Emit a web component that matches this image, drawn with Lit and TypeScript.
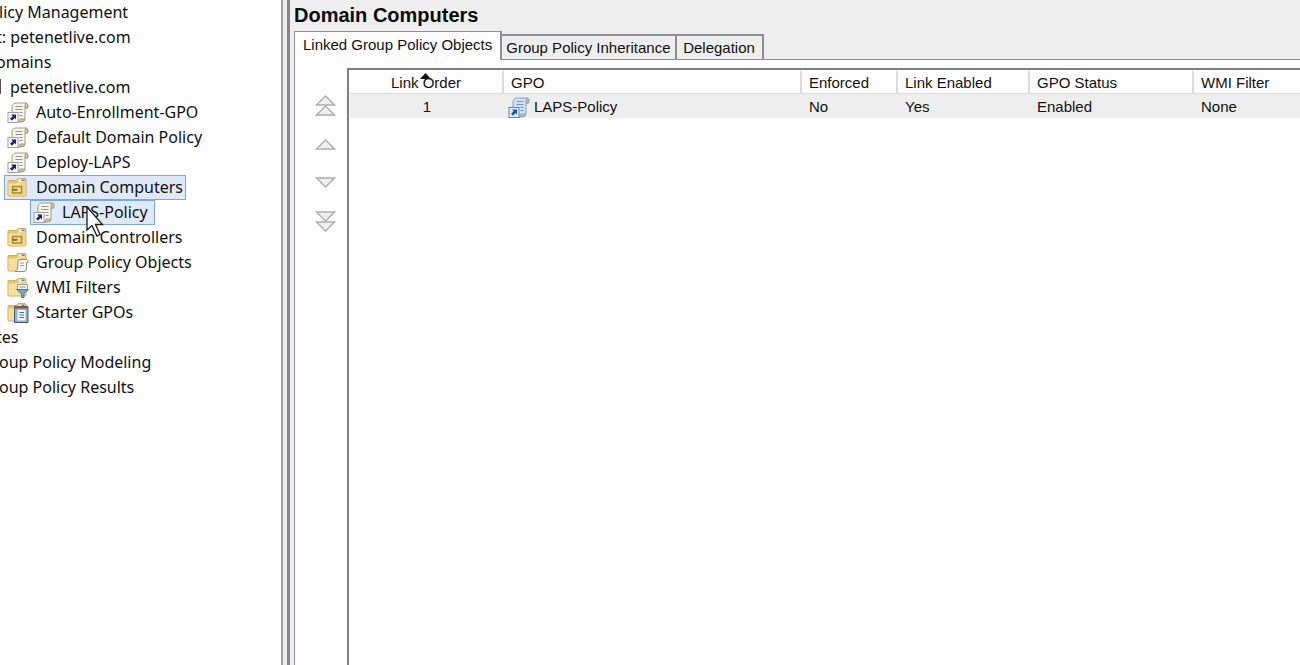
import { LitElement, html, css, svg, nothing } from "lit";
import { customElement, state } from "lit/decorators.js";

const sheet = (paper: string, roll: string, edge: string, ink: string) => svg`
  <path d="M6 2.500 Q6.500 1 8.500 1 H19.500 Q21.200 1.500 20.800 4.500 L20.500 6 H18 V16 Q18 19.500 15 19.800 H5 V4 Z" fill="${paper}" stroke="${edge}" stroke-width=".9"/>
  <path d="M18 6 V3 Q18.200 1 19.600 1.200 Q21.400 2 20.800 5 L20.500 6 Z" fill="${roll}" stroke="${edge}" stroke-width=".8"/>
  <path d="M11 19.800 Q13 19.500 13 17 H18 Q18 19.500 15 19.800 Z" fill="${roll}" stroke="${edge}" stroke-width=".8"/>
  <path d="M8.500 4.500 H15.500 M8.500 7.500 H15.500 M12.500 10.500 H15.500 M12.500 13.500 H15.500" stroke="${ink}" stroke-width="1.200"/>`;

const shortcut = (box: string, edge: string, arrow: string) => svg`
  <rect x="1" y="10.500" width="10" height="10" fill="${box}" stroke="${edge}"/>
  <path d="M4 12.500 H9 V17.500 L7.500 16 L5 18.800 L3 16.800 L5.700 14.200 Z" fill="${arrow}"/>`;

const folder = svg`
  <path d="M1 4.500 Q1 3.500 2 3.500 H9 L11 1.500 H18 Q19 1.500 19 2.500 V18 Q19 19 18 19 H2 Q1 19 1 18 Z" fill="#e3c473" stroke="#cfae5c"/>
  <path d="M11.500 2.500 H17.500 V4.500 H11.500 Z" fill="#fff"/>
  <path d="M14.500 2.500 H17.500 V4 H14.500 Z" fill="#3b8fd6"/>
  <path d="M1.500 6.500 H9.500 L11.500 4.800 H18.500 V18.500 H1.500 Z" fill="#f4df9c"/>
  <path d="M14 5 H18.500 V18.500 H11 Z" fill="#ecd083" opacity=".7"/>`;

const icons: Record<string, unknown> = {
  link: svg`${sheet("#f8f4e2", "#d3c794", "#96937f", "#8f92b0")}${shortcut("#ffffff", "#9a9db8", "#241a86")}`,
  linkBlue: svg`${sheet("#cfe2f4", "#b0c2b4", "#7f9bba", "#7399cc")}${shortcut("#dcebfa", "#5c86c4", "#2350a8")}`,
  ou: svg`${folder}
    <path d="M5.500 9.500 H14.500 V16 H5.500 Z" fill="#f3dc92" stroke="#a98a30" stroke-width="1.500"/>
    <path d="M5.500 12.800 H10.500" stroke="#8d6f1c" stroke-width="2"/>`,
  objects: svg`${folder}
    <path d="M11 9 Q11.500 7.500 13 7.500 H20 Q21.500 8 21 10.500 H19.500 V17 Q19 19.500 17 19.500 H8 L10.500 17 Z" fill="#f7f5ec" stroke="#8e8c84"/>
    <path d="M13 11 H17 M13 13.500 H17" stroke="#9a9aa8"/>`,
  filter: svg`${folder}
    <path d="M10.500 7.500 H20.500 V13 H10.500 Z" fill="#f4f4f4" stroke="#9c9c9c"/>
    <path d="M12.500 10 H18.500" stroke="#8e8e9e"/>
    <path d="M9.500 12.500 H21.500 L17 16.500 V20.500 H14.500 V16.500 Z" fill="#7ba3cc" stroke="#45658c" stroke-width=".8"/>`,
  starter: svg`${folder}
    <path d="M7.500 4.500 H21 V20.500 H7.500 Z" fill="#8fb0d8" stroke="#4c5a78"/>
    <path d="M7.500 4 H21 V6.500 H7.500 Z" fill="#8a5147"/>
    <path d="M10.500 8 H18.500 V18.500 H10.500 Z" fill="#f2f7fd"/>
    <path d="M12.500 10.500 H17 M12.500 13 H17 M12.500 15.500 H17" stroke="#3f69a8"/>`,
};

const icon = (name: string) =>
  html`<svg class="icon" viewBox="0 0 22 21" width="22" height="21" fill="none" aria-hidden="true">${icons[name]}</svg>`;

interface Node {
  label: string;
  level: "edge" | "inner" | "root" | "child" | "leaf";
  icon?: string;
}

const nodes: Node[] = [
  { label: "licy Management", level: "edge" },
  { label: "t: petenetlive.com", level: "inner" },
  { label: "omains", level: "inner" },
  { label: "petenetlive.com", level: "root" },
  { label: "Auto-Enrollment-GPO", level: "child", icon: "link" },
  { label: "Default Domain Policy", level: "child", icon: "link" },
  { label: "Deploy-LAPS", level: "child", icon: "link" },
  { label: "Domain Computers", level: "child", icon: "ou" },
  { label: "LAPS-Policy", level: "leaf", icon: "link" },
  { label: "Domain Controllers", level: "child", icon: "ou" },
  { label: "Group Policy Objects", level: "child", icon: "objects" },
  { label: "WMI Filters", level: "child", icon: "filter" },
  { label: "Starter GPOs", level: "child", icon: "starter" },
  { label: "tes", level: "inner" },
  { label: "oup Policy Modeling", level: "edge" },
  { label: "oup Policy Results", level: "edge" },
];

@customElement("policy-tree")
export class PolicyTree extends LitElement {
  static styles = css`
    :host {
      display: block;
      overflow: hidden;
      background: #fdfdfd;
    }
    .tree {
      position: relative;
      display: flex;
      flex-direction: column;
      align-items: flex-start;
    }
    .node {
      box-sizing: border-box;
      display: flex;
      align-items: center;
      height: 25px;
      padding: 0 2px 2px 1px;
      border: 1px solid transparent;
      background: none;
      font: 16px/20px "Noto Sans", "Open Sans", sans-serif;
      color: #111;
      white-space: nowrap;
    }
    .edge {
      margin-left: -3px;
    }
    .inner {
      margin-left: -6px;
    }
    .root {
      padding-left: 0;
      gap: 9px;
      margin-left: -1px;
    }
    .server {
      width: 1px;
      height: 15px;
      background: #4b5468;
    }
    .child,
    .leaf {
      gap: 7px;
      margin-left: 4px;
      padding-left: 2px;
    }
    .leaf {
      margin-left: 30px;
      padding-right: 6px;
    }
    .marked {
      border-color: #7da7dc;
      background: #dfe9f8;
    }
    .icon {
      flex: none;
      margin-top: 2px;
    }
    .cursor {
      position: absolute;
      left: 86px;
      top: 206px;
    }
  `;

  @state() private selected = 7;
  @state() private hovered = 8;

  render() {
    return html`<div class="tree" role="tree" aria-label="Policy tree">
      ${nodes.map(
        (n, i) => html`<button
          class="node ${n.level} ${i === this.selected || i === this.hovered ? "marked" : ""}"
          role="treeitem"
          aria-selected=${i === this.selected}
          @click=${() => (this.selected = i)}
        >
          ${n.level === "root" ? html`<span class="server"></span>` : nothing}
          ${n.icon ? icon(n.icon) : nothing}<span>${n.label}</span>
        </button>`
      )}
      <svg class="cursor" width="18" height="32" viewBox="0 0 18 32" aria-hidden="true">
        <path d="M1 1 V24 L6 19.500 L11 30 L14 28.500 L9.500 18.500 H16.500 Z" fill="#fff" stroke="#1c1c1c" stroke-width="1.300"/>
      </svg>
    </div>`;
  }
}

const up = (y: number) => svg`<path d="M1.500 ${y + 9} L10.500 ${y} L19.500 ${y + 9} Z"/>`;
const down = (y: number) => svg`<path d="M1.500 ${y} L10.500 ${y + 9} L19.500 ${y} Z"/>`;

const moves = [
  { label: "Move link to top", shape: svg`${up(1)}${up(11)}`, h: 22 },
  { label: "Move link up", shape: up(1), h: 14 },
  { label: "Move link down", shape: down(3), h: 14 },
  { label: "Move link to bottom", shape: svg`${down(1)}${down(11)}`, h: 22 },
];

const tabs = ["Linked Group Policy Objects", "Group Policy Inheritance", "Delegation"];

@customElement("link-panel")
export class LinkPanel extends LitElement {
  static styles = css`
    :host {
      display: flex;
      flex-direction: column;
      min-width: 0;
      overflow: hidden;
      padding-left: 4px;
      background: #eeeeee;
      font: 15px/20px "Liberation Sans", Arial, sans-serif;
      color: #111;
    }
    .title {
      margin: 0;
      height: 31px;
      font-size: 20px;
      line-height: 30px;
      font-weight: bold;
      color: #0a0a0a;
    }
    .tabs {
      display: flex;
      align-items: flex-end;
      height: 29px;
      flex: none;
    }
    .tab {
      box-sizing: border-box;
      height: 26px;
      min-width: 87px;
      padding: 0 4px;
      border: 1px solid #8e8e98;
      border-width: 2px 2px 1px 0;
      background: #eeeeee;
      font: 15px/20px "Liberation Sans", Arial, sans-serif;
      color: #111;
      white-space: nowrap;
    }
    .tab.active {
      height: 29px;
      padding: 0 8px 3px;
      border-width: 1px 2px 0 1px;
      background: #fdfdfd;
    }
    .rest {
      flex: 1;
      border-bottom: 1px solid #8e8e98;
    }
    .page {
      flex: 1;
      display: flex;
      border-left: 1px solid #8e8e98;
      background: #fdfdfd;
      padding-top: 8px;
    }
    .moves {
      flex: none;
      display: flex;
      flex-direction: column;
      align-items: center;
      gap: 22px;
      width: 52px;
      padding: 27px 0 0 9px;
      box-sizing: border-box;
    }
    .move {
      display: block;
      padding: 0;
      border: 0;
      background: none;
    }
    .move svg {
      display: block;
      fill: #efefef;
      stroke: #adadad;
      stroke-width: 1.300;
    }
    .list {
      flex: 1;
      min-width: 0;
      border: solid #7c7c84;
      border-width: 2px 0 0 2px;
      padding: 1px 0 0 1px;
    }
    .grid {
      width: 100%;
      table-layout: fixed;
      border-collapse: separate;
      border-spacing: 0;
    }
    .order { width: 154px; }
    .gpo { width: 298px; }
    .enforced { width: 96px; }
    .enabled { width: 132px; }
    .status { width: 164px; }
    th {
      height: 23px;
      padding: 2px 6px 0;
      border-right: 2px solid #dcdcdc;
      border-bottom: 1px solid #dcdcdc;
      font-weight: normal;
      text-align: left;
      white-space: nowrap;
      box-sizing: border-box;
    }
    th:last-child { border-right: 0; }
    td {
      height: 24px;
      padding: 2px 6px 0;
      box-sizing: border-box;
      background: #eeeeee;
      white-space: nowrap;
    }
    th + th,
    td + td { padding-left: 7px; }
    th:first-child,
    td:first-child {
      position: relative;
      text-align: center;
    }
    .sort {
      position: absolute;
      left: 69px;
      top: 2px;
    }
    .name {
      display: flex;
      align-items: center;
      gap: 4px;
      margin-left: -3px;
    }
  `;

  @state() private active = 0;

  render() {
    return html`
      <h1 class="title">Domain Computers</h1>
      <div class="tabs" role="tablist">
        ${tabs.map(
          (t, i) => html`<button
            class="tab ${i === this.active ? "active" : ""}"
            role="tab"
            aria-selected=${i === this.active}
            @click=${() => (this.active = i)}
          >${t}</button>`
        )}
        <span class="rest"></span>
      </div>
      <div class="page">
        <div class="moves">
          ${moves.map(
            (m) => html`<button class="move" aria-label=${m.label}>
              <svg width="21" height=${m.h} viewBox="0 0 21 ${m.h}">${m.shape}</svg>
            </button>`
          )}
        </div>
        <div class="list">
          <table class="grid">
            <colgroup>
              <col class="order" /><col class="gpo" /><col class="enforced" />
              <col class="enabled" /><col class="status" /><col />
            </colgroup>
            <thead>
              <tr>
                <th aria-sort="ascending">Link Order<svg class="sort" width="13" height="7" aria-hidden="true"><path d="M6.500 0 L12 6 H1 Z" fill="#111"/></svg></th>
                <th>GPO</th>
                <th>Enforced</th>
                <th>Link Enabled</th>
                <th>GPO Status</th>
                <th>WMI Filter</th>
              </tr>
            </thead>
            <tbody>
              <tr>
                <td>1</td>
                <td><span class="name">${icon("linkBlue")}LAPS-Policy</span></td>
                <td>No</td>
                <td>Yes</td>
                <td>Enabled</td>
                <td>None</td>
              </tr>
            </tbody>
          </table>
        </div>
      </div>
    `;
  }
}

@customElement("app-root")
export class AppRoot extends LitElement {
  static styles = css`
    :host {
      display: grid;
      grid-template-columns: 281px 9px minmax(0, 1fr);
      height: 100vh;
      overflow: hidden;
      background: #eeeeee;
    }
    .splitter {
      box-sizing: border-box;
      border-left: 2px solid #a0a0ac;
      border-right: 3px solid #85858a;
      background: #ececec;
    }
  `;

  render() {
    return html`<policy-tree></policy-tree>
      <div class="splitter" role="separator" aria-orientation="vertical"></div>
      <link-panel></link-panel>`;
  }
}
